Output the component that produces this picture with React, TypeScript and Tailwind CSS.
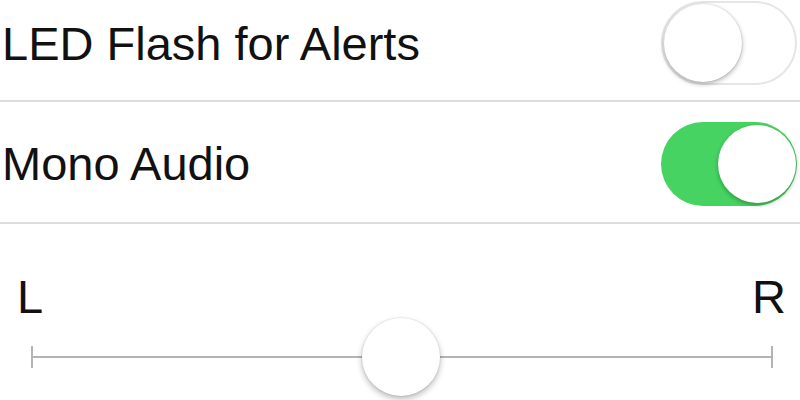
import React from "react";

function Toggle({ on }: { on: boolean }) {
  return on ? (
    <div className="relative h-[84px] w-[136px] rounded-full bg-[#46d361]">
      <div className="absolute right-[1px] top-[3px] h-[78px] w-[78px] rounded-full bg-white shadow-[0_2px_4px_rgba(0,0,0,0.3)]" />
    </div>
  ) : (
    <div className="relative h-[84px] w-[136px] rounded-full border-[2px] border-[#e6e6e6] bg-white">
      <div className="absolute left-[1px] top-[1px] h-[78px] w-[78px] rounded-full bg-white shadow-[0_2px_5px_rgba(0,0,0,0.3),0_0_0_1px_rgba(0,0,0,0.06)]" />
    </div>
  );
}

export default function App() {
  return (
    <div
      className="h-[400px] w-[800px] overflow-hidden bg-white text-[#111]"
      style={{ fontFamily: '"Liberation Sans", Arial, sans-serif' }}
    >
      <div className="flex h-[100px] items-center justify-between pb-[14px] pl-[2px] pr-[3px]">
        <span className="text-[47px] leading-none">LED Flash for Alerts</span>
        <Toggle on={false} />
      </div>
      <div className="h-[2px] bg-[#dcdcdc]" />
      <div className="flex h-[120px] items-center justify-between pl-[2px] pr-[3px] pt-[3px]">
        <span className="text-[47px] leading-none">Mono Audio</span>
        <Toggle on={true} />
      </div>
      <div className="h-[2px] bg-[#dcdcdc]" />
      <div className="flex justify-between pl-[17px] pr-[14px] pt-[49px]">
        <span className="text-[47px] leading-none">L</span>
        <span className="text-[47px] leading-none">R</span>
      </div>
      <div className="relative mx-[31px] mt-[26px] h-[22px] w-[742px]">
        <div className="absolute left-0 top-[10px] h-[2px] w-full bg-[#b4b4b4]" />
        <div className="absolute left-0 top-0 h-[22px] w-[2px] bg-[#b4b4b4]" />
        <div className="absolute right-0 top-0 h-[22px] w-[2px] bg-[#b4b4b4]" />
        <div className="absolute left-[331px] top-[-28px] h-[78px] w-[78px] rounded-full bg-white shadow-[0_3px_6px_rgba(0,0,0,0.28),0_0_0_1px_rgba(0,0,0,0.05)]" />
      </div>
    </div>
  );
}
